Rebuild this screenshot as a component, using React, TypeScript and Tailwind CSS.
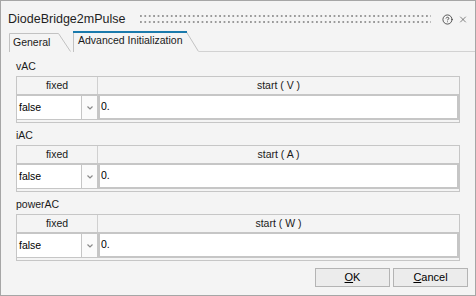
import React from "react";
import { CircleHelp, X } from "lucide-react";

function Group({ label, unit }: { label: string; unit: string }) {
  return (
    <div className="flex flex-col mb-[4px]">
      <div className="h-[16px] leading-[16px] text-[10.5px] text-[#1a1a1a]">{label}</div>
      <div className="mt-[2px] h-[47px] border border-[#c6c6c6] flex flex-col bg-[#f4f4f4]">
        <div className="h-[18px] flex border-b border-[#c6c6c6] text-[10.5px] leading-[17px] text-[#1a1a1a]">
          <div className="w-[81px] border-r border-[#d0d0d0] text-center">fixed</div>
          <div className="flex-1 text-center">start ( {unit} )</div>
        </div>
        <div className="h-[25px] flex text-[10.5px] text-black">
          <div className="w-[65px] bg-white border-t border-b border-r border-[#c6c6c6] flex items-center pl-[2px]">
            false
          </div>
          <div className="w-[16px] bg-[#fbfbfb] border-t border-b border-r border-[#c6c6c6] flex items-center justify-center">
            <svg width="6" height="4" viewBox="0 0 6 4">
              <path d="M0.5 0.5 L3 3 L5.5 0.5" fill="none" stroke="#8a8a8a" strokeWidth="1.2" />
            </svg>
          </div>
          <div className="flex-1 bg-white border-t border-l-2 border-r-2 border-b-2 border-[#c6c6c6] flex items-center pl-[1px]">
            0.
          </div>
        </div>
      </div>
    </div>
  );
}

export default function App() {
  return (
    <div className="w-[476px] h-[296px] border border-[#a6a6a6] bg-[#f4f4f4] flex flex-col font-['Liberation_Sans',Arial,sans-serif] text-[#1e1e1e] overflow-hidden">
      {/* Title bar */}
      <div className="h-[30px] pt-[6px] pl-[7px] pr-[7px] flex items-center">
        <div className="text-[12.5px] leading-[16px] whitespace-nowrap">DiodeBridge2mPulse</div>
        <svg className="flex-1 h-[12px] ml-[15px]" shapeRendering="crispEdges">
          <defs>
            <pattern id="dots" width="4.4" height="6" patternUnits="userSpaceOnUse">
              <rect x="0" y="2" width="2" height="2" fill="#9a9a9a" />
            </pattern>
          </defs>
          <rect x="0" y="0" width="100%" height="12" fill="url(#dots)" />
        </svg>
        <div className="ml-[11px] w-[11px] h-[11px] flex items-center justify-center text-[#2e2e2e]">
          <CircleHelp size={11} strokeWidth={1.7} />
        </div>
        <div className="ml-[5px] w-[10px] h-[10px] flex items-center justify-center text-[#2e2e2e]">
          <X size={11} strokeWidth={1.4} />
        </div>
      </div>

      {/* Tabs */}
      <div className="h-[21px] flex">
        <div className="w-[8px] h-full" />
        <div className="relative w-[62px] h-full">
          <svg className="absolute inset-0" width="62" height="21">
            <path d="M0.5 21 V2.5 H49.5 L61.5 20.5" fill="none" stroke="#c2c2c2" strokeWidth="1" />
          </svg>
          <div className="relative pl-[4px] pt-[5px] text-[10.5px] leading-[12px] text-[#1a1a1a]">General</div>
        </div>
        <div className="w-[2px] h-full" />
        <div className="relative w-[126px] h-full">
          <svg className="absolute inset-0" width="126" height="21">
            <path d="M0.5 21 V1" fill="none" stroke="#c2c2c2" strokeWidth="1" />
            <path d="M113.5 1 L125.5 20.5" fill="none" stroke="#c2c2c2" strokeWidth="1" />
            <path d="M0 1 H114" fill="none" stroke="#1a7aac" strokeWidth="2" />
          </svg>
          <div className="relative pl-[5px] pt-[3px] text-[10.5px] leading-[12px] text-[#1a1a1a] whitespace-nowrap">
            Advanced Initialization
          </div>
        </div>
        <div className="flex-1 h-full border-b border-[#d2d2d2]" />
      </div>

      {/* Content */}
      <div className="flex-1 flex flex-col px-[15px] pt-[6px]">
        <Group label="vAC" unit="V" />
        <Group label="iAC" unit="A" />
        <Group label="powerAC" unit="W" />
      </div>

      {/* Buttons */}
      <div className="flex justify-end gap-[3px] pr-[7px] pb-[8px]">
        <button className="w-[75px] h-[19px] bg-[#ececec] border border-[#b4b4b4] text-[11px] leading-[17px] text-black">
          <span className="underline">O</span>K
        </button>
        <button className="w-[75px] h-[19px] bg-[#ececec] border border-[#b4b4b4] text-[11px] leading-[17px] text-black">
          <span className="underline">C</span>ancel
        </button>
      </div>
    </div>
  );
}
